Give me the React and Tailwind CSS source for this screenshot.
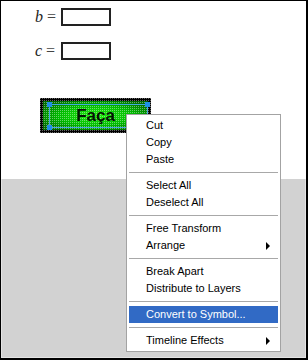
import React from "react";

const items = [
  { t: "Cut" },
  { t: "Copy" },
  { t: "Paste" },
  { sep: true },
  { t: "Select All" },
  { t: "Deselect All" },
  { sep: true },
  { t: "Free Transform" },
  { t: "Arrange", sub: true },
  { sep: true },
  { t: "Break Apart" },
  { t: "Distribute to Layers" },
  { sep: true },
  { t: "Convert to Symbol...", active: true },
  { sep: true },
  { t: "Timeline Effects", sub: true },
];

function Field({ label }) {
  return (
    <div className="flex items-center pl-[34px] h-[18px]">
      <div
        className="w-[26px] text-[16px] leading-none text-[#222] flex items-center gap-[4px]"
        style={{ fontFamily: '"Liberation Serif", serif' }}
      >
        <span className="italic">{label}</span>
        <span className="text-[#444]">=</span>
      </div>
      <div className="w-[50px] h-[18px] border-2 border-[#222] bg-white" />
    </div>
  );
}

function FacaButton() {
  return (
    <div className="relative ml-[39px] w-[111px] h-[35px] flex items-center justify-center">
      <svg className="absolute inset-0" width="111" height="35" viewBox="0 0 111 35">
        <defs>
          <radialGradient id="g" cx="0.5" cy="0.5" r="0.6">
            <stop offset="0" stopColor="#22f010" />
            <stop offset="0.6" stopColor="#00b800" />
            <stop offset="1" stopColor="#006a00" />
          </radialGradient>
          <pattern id="dots" width="2" height="2" patternUnits="userSpaceOnUse">
            <rect x="0" y="0" width="1" height="1" fill="#ffffff" opacity="0.4" />
          </pattern>
        </defs>
        <rect x="0" y="0" width="111" height="35" fill="#000" />
        <rect x="3" y="3" width="105" height="29" fill="url(#g)" />
        <rect x="0" y="0" width="111" height="35" fill="url(#dots)" />
        <rect x="9.5" y="6.5" width="98" height="23" fill="none" stroke="#45a8e0" strokeWidth="1" />
        <rect x="7" y="4" width="5" height="5" fill="#1f8fe6" />
        <rect x="7" y="27" width="5" height="5" fill="#1f8fe6" />
        <rect x="105" y="4" width="5" height="5" fill="#1f8fe6" />
        <rect x="105" y="27" width="5" height="5" fill="#1f8fe6" />
      </svg>
      <span
        className="relative font-bold text-[17px] leading-none text-[#041404]"
        style={{ fontFamily: '"Liberation Sans", Arial, sans-serif' }}
      >
        Faça
      </span>
    </div>
  );
}

function Menu() {
  return (
    <div
      className="absolute left-[125px] top-[113px] w-[155px] bg-white border border-[#a3a3a3] p-[2px] text-[11px] text-black"
      style={{ fontFamily: '"Liberation Sans", Arial, sans-serif' }}
    >
      {items.map((it, i) =>
        it.sep ? (
          <div key={i} className="h-[9px] flex items-center">
            <div className="w-full h-px bg-[#a8a8a8]" />
          </div>
        ) : (
          <div
            key={i}
            className={
              "h-[17px] flex items-center justify-between pl-[17px] pr-[8px] " +
              (it.active ? "bg-[#316ac5] text-white" : "")
            }
          >
            <span>{it.t}</span>
            {it.sub && (
              <span className="w-0 h-0 border-y-[4px] border-y-transparent border-l-[4px] border-l-black" />
            )}
          </div>
        )
      )}
    </div>
  );
}

export default function App() {
  return (
    <div className="relative w-[308px] h-[360px] border-t border-l border-r-2 border-b-2 border-black flex flex-col overflow-hidden bg-white">
      <div className="h-[178px] bg-white pt-[7px] flex flex-col">
        <Field label="b" />
        <div className="mt-[16px]">
          <Field label="c" />
        </div>
        <div className="mt-[38px]">
          <FacaButton />
        </div>
      </div>
      <div className="flex-1 bg-[#d2d2d2] border-l border-r border-b border-[#e4e4e4]" />
      <Menu />
    </div>
  );
}
